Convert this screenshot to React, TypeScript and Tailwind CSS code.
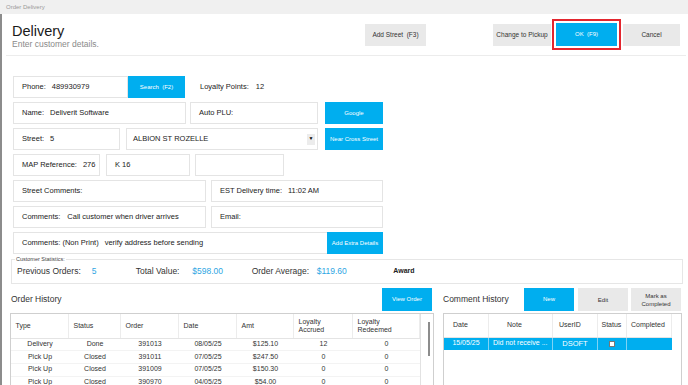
import type { ReactNode } from "react";

interface FieldProps {
  label?: string;
  value?: string;
  className?: string;
  children?: ReactNode;
}

const Field = ({ label, value, className = "", children }: FieldProps) => (
  <div
    className={`flex items-center h-[22px] border border-[#e4e4e4] bg-white pl-[8px] gap-[6px] shrink-0 ${className}`}
  >
    {label && <span>{label}</span>}
    {value && <span>{value}</span>}
    {children}
  </div>
);

const BlueButton = ({ children, className = "" }: { children: ReactNode; className?: string }) => (
  <div
    className={`flex items-center justify-center bg-[#00aeef] text-white text-[6px] shrink-0 whitespace-pre ${className}`}
  >
    {children}
  </div>
);

const GrayButton = ({ children, className = "" }: { children: ReactNode; className?: string }) => (
  <div
    className={`flex items-center justify-center bg-[#e9e9e9] text-[#333] text-[6.5px] shrink-0 whitespace-pre text-center leading-[8px] ${className}`}
  >
    {children}
  </div>
);

const orderCols = [
  { name: "Type", w: "w-[58px]" },
  { name: "Status", w: "w-[52px]" },
  { name: "Order", w: "w-[58px]" },
  { name: "Date", w: "w-[58px]" },
  { name: "Amt", w: "w-[57px]" },
  { name: "Loyalty\nAccrued", w: "w-[59px]" },
  { name: "Loyalty\nRedeemed", w: "w-[67px]" },
];

const orders = [
  ["Delivery", "Done", "391013", "08/05/25", "$125.10", "12", "0"],
  ["Pick Up", "Closed", "391011", "07/05/25", "$247.50", "0", "0"],
  ["Pick Up", "Closed", "391009", "07/05/25", "$150.30", "0", "0"],
  ["Pick Up", "Closed", "390970", "04/05/25", "$54.00", "0", "0"],
];

const commentCols = [
  { name: "Date", w: "w-[45px] pl-[9px]" },
  { name: "Note", w: "w-[64px] pl-[18px]" },
  { name: "UserID", w: "w-[45px] pl-[6px]" },
  { name: "Status", w: "w-[29px] pl-[3.5px]" },
  { name: "Completed", w: "w-[45px] pl-[4px]" },
];

export default function App() {
  return (
    <div className="w-[688px] h-[385px] overflow-hidden bg-white font-['Liberation_Sans',Arial,sans-serif] text-[#222] flex flex-col">
      {/* window title */}
      <div className="h-[14px] shrink-0 bg-[#f0f0f0] flex items-center pl-[6px] text-[6px] text-[#9a9a9a]">
        Order Delivery
      </div>

      <div className="flex-1 border-l-2 border-[#8c8c8c] flex flex-col">
        {/* header */}
        <div className="h-[42px] shrink-0 ml-[4px] mr-[2px] border-b border-[#ececec] flex items-center pl-[6px] pr-[6px]">
          <div className="w-[353px] self-start pt-[10px] flex flex-col">
            <span className="text-[14.5px] leading-[15px] text-[#1a1a1a]">Delivery</span>
            <span className="text-[8.5px] leading-[10px] text-[#8a8a8a]">Enter customer details.</span>
          </div>
          <GrayButton className="w-[61px] h-[22px]">Add Street  (F3)</GrayButton>
          <div className="flex-1" />
          <GrayButton className="w-[58px] h-[22px]">Change to Pickup</GrayButton>
          <div className="ml-[1px] border-2 border-[#e3262f] p-[2px] shrink-0">
            <BlueButton className="w-[61px] h-[23px] text-[6.5px]">OK  (F9)</BlueButton>
          </div>
          <GrayButton className="ml-[2px] w-[57px] h-[22px]">Cancel</GrayButton>
        </div>

        {/* form */}
        <div className="mt-[20px] ml-[11px] flex flex-col gap-[4px] text-[7.5px]">
          <div className="flex items-center">
            <Field label="Phone:" value="489930979" className="w-[115px]" />
            <BlueButton className="w-[57px] h-[22px] text-[6.5px]">Search  (F2)</BlueButton>
            <span className="ml-[15px]">Loyalty Points:</span>
            <span className="ml-[7px]">12</span>
          </div>
          <div className="flex items-center">
            <Field label="Name:" value="Deliverit Software" className="w-[173px]" />
            <Field label="Auto PLU:" className="ml-[4px] w-[128px]" />
            <BlueButton className="ml-[7px] w-[58px] h-[22px] text-[5.5px]">Google</BlueButton>
          </div>
          <div className="flex items-center">
            <Field label="Street:" value="5" className="w-[107px]" />
            <div className="ml-[6px] w-[192px] h-[22px] border border-[#e4e4e4] flex items-center pl-[6px] pr-[2px]">
              <span className="flex-1">ALBION ST ROZELLE</span>
              <span className="w-[8px] h-[11px] bg-[#ececec] flex items-center justify-center text-[5px] text-black">▼</span>
            </div>
            <BlueButton className="ml-[7px] w-[58px] h-[22px] text-[5.8px]">Near Cross Street</BlueButton>
          </div>
          <div className="flex items-center">
            <Field label="MAP Reference:" value="276" className="w-[87px] gap-[5px]" />
            <Field value="K 16" className="ml-[6px] w-[84px] pl-[3px]" />
            <Field className="ml-[5px] w-[89px]" />
          </div>
          <div className="flex items-center">
            <Field label="Street Comments:" className="w-[193px]" />
            <Field label="EST Delivery time:" value="11:02 AM" className="ml-[5px] w-[172px]" />
          </div>
          <div className="flex items-center">
            <Field label="Comments:" value="Call customer when driver arrives" className="w-[193px] gap-[7px]" />
            <Field label="Email:" className="ml-[5px] w-[172px]" />
          </div>
          <div className="flex items-center">
            <Field label="Comments: (Non Print)" value="verify address before sending" className="w-[370px] pr-0">
              <BlueButton className="ml-auto w-[56px] h-[22px] -mr-px text-[5.8px]">Add Extra Details</BlueButton>
            </Field>
          </div>
        </div>

        {/* customer statistics */}
        <div className="relative mt-[5px] ml-[9px] w-[672px] h-[25px] shrink-0 border border-[#e6e6e6] flex items-center pl-[5px] text-[8.5px] text-[#333]">
          <span className="absolute top-[-4px] left-[3px] bg-white px-[1px] text-[5.5px] leading-[7px] text-[#444]">
            Customer Statistics:
          </span>
          <span className="w-[74.7px]">Previous Orders:</span>
          <span className="w-[44px] text-[#2ea6e3]">5</span>
          <span className="w-[56.6px]">Total Value:</span>
          <span className="w-[59.4px] text-[#2ea6e3]">$598.00</span>
          <span className="w-[65px]">Order Average:</span>
          <span className="w-[76.6px] text-[#2ea6e3]">$119.60</span>
          <span className="text-[7px] font-bold text-[#222]">Award</span>
        </div>

        {/* history panels */}
        <div className="mt-[3.5px] flex flex-1 min-h-0">
          {/* order history */}
          <div className="ml-[8px] w-[424px] flex flex-col">
            <div className="h-[24px] flex items-center">
              <span className="pl-[1px] text-[8.5px] text-[#333] flex-1">Order History</span>
              <BlueButton className="mr-[2px] w-[50px] h-[22.5px] text-[6px]">View Order</BlueButton>
            </div>
            <div className="mt-[1px] flex-1 border border-[#cfcfcf] flex text-[7px] text-[#333]">
              <div className="w-[409px] flex flex-col">
                <div className="flex h-[25px] border-b border-[#e4e4e4]">
                  {orderCols.map((c) => (
                    <div
                      key={c.name}
                      className={`${c.w} border-r border-[#ececec] flex items-center pl-[4.5px] whitespace-pre leading-[8px]`}
                    >
                      {c.name}
                    </div>
                  ))}
                </div>
                {orders.map((row, i) => (
                  <div key={i} className="flex h-[12.7px] border-b border-[#f3f3f3] shrink-0">
                    {row.map((cell, j) => (
                      <div key={j} className={`${orderCols[j].w} flex items-center justify-center`}>
                        {cell}
                      </div>
                    ))}
                  </div>
                ))}
              </div>
              <div className="w-[13px] border-l border-[#e2e2e2] pt-[8.5px]">
                <div className="ml-[6.5px] w-[2px] h-[34px] bg-[#8c8c8c]" />
              </div>
            </div>
          </div>

          {/* comment history */}
          <div className="ml-[9px] w-[239px] flex flex-col">
            <div className="h-[24px] flex items-center">
              <span className="w-[81px] text-[8.5px] text-[#333]">Comment History</span>
              <BlueButton className="w-[50px] h-[22.5px] text-[6px]">New</BlueButton>
              <GrayButton className="ml-[4px] w-[50px] h-[22.5px] text-[6px]">Edit</GrayButton>
              <GrayButton className="ml-[3px] w-[50px] h-[22.5px] text-[6px] leading-[7.5px]">
                {"Mark as\nCompleted"}
              </GrayButton>
            </div>
            <div className="mt-[1px] flex-1 border border-[#cfcfcf] text-[7px] text-[#333] mb-[3px]">
              <div className="flex h-[24px] w-[228px] border-b border-[#e4e4e4]">
                {commentCols.map((c) => (
                  <div key={c.name} className={`${c.w} border-r border-[#ececec] flex items-center`}>
                    {c.name}
                  </div>
                ))}
              </div>
              <div className="flex h-[12px] w-[228px] bg-[#00aeef] text-white">
                <div className="w-[45px] border-r border-[#7fd3f5] flex items-center justify-center">15/05/25</div>
                <div className="w-[64px] border-r border-[#7fd3f5] flex items-center pl-[4px]">Did not receive ...</div>
                <div className="w-[45px] border-r border-[#7fd3f5] flex items-center justify-center text-[7.5px]">DSOFT</div>
                <div className="w-[29px] border-r border-[#7fd3f5] flex items-center justify-center">
                  <span className="w-[6px] h-[6px] bg-white border border-[#777]" />
                </div>
                <div className="w-[45px]" />
              </div>
            </div>
          </div>
        </div>
      </div>
    </div>
  );
}
